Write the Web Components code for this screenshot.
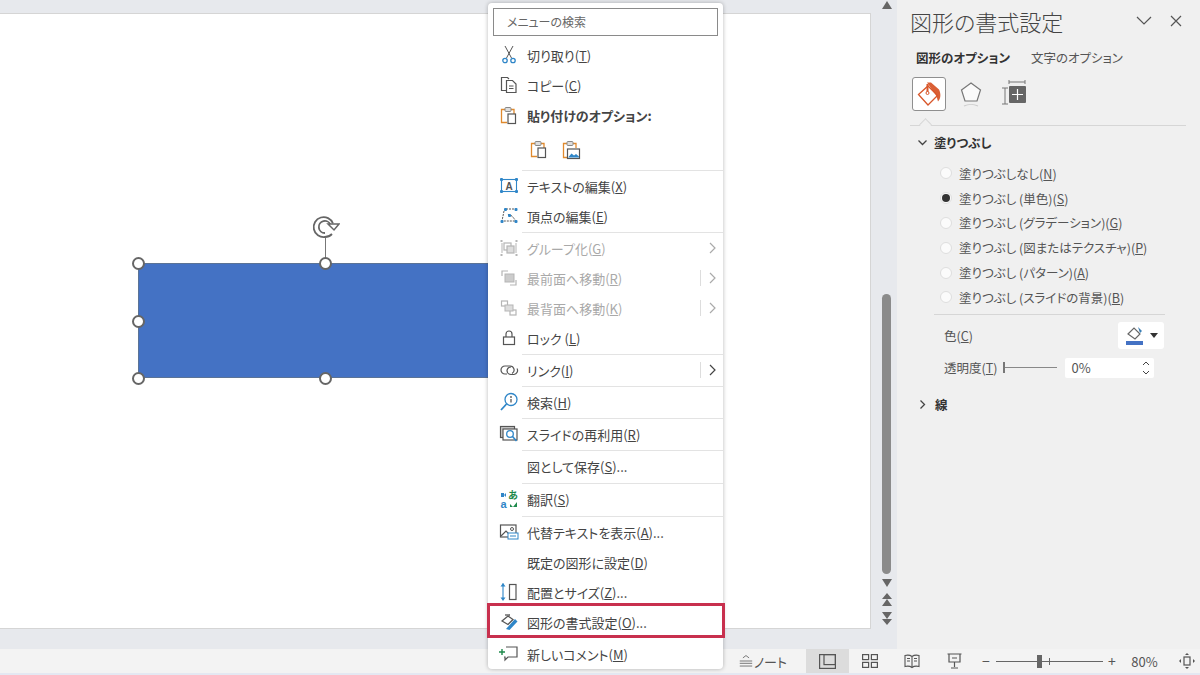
<!DOCTYPE html>
<html lang="ja"><head><meta charset="utf-8"><title>図形の書式設定</title>
<style>
html,body{margin:0;padding:0;width:1200px;height:675px;overflow:hidden;background:#e7e9ed}
body{font-family:"Noto Sans CJK JP","Noto Sans",sans-serif;font-feature-settings:"palt";color:#444}
</style></head><body>
<x-app>
  <x-canvas slot="canvas"></x-canvas>
  <x-scrollbar slot="scroll"></x-scrollbar>
  <x-format-panel slot="panel"></x-format-panel>
  <x-statusbar slot="status"></x-statusbar>
  <x-menu slot="menu">
    <x-menu-item icon="cut">切り取り(<u>T</u>)</x-menu-item>
    <x-menu-item icon="copy">コピー(<u>C</u>)</x-menu-item>
    <x-menu-item icon="paste" h="31"><b>貼り付けのオプション:</b></x-menu-item>
    <x-paste-row></x-paste-row>
    <x-sep></x-sep>
    <x-menu-item icon="textedit">テキストの編集(<u>X</u>)</x-menu-item>
    <x-menu-item icon="points">頂点の編集(<u>E</u>)</x-menu-item>
    <x-sep></x-sep>
    <x-menu-item icon="group" disabled arrow="plain">グループ化(<u>G</u>)</x-menu-item>
    <x-menu-item icon="front" disabled arrow="split">最前面へ移動(<u>R</u>)</x-menu-item>
    <x-menu-item icon="back" disabled arrow="split">最背面へ移動(<u>K</u>)</x-menu-item>
    <x-menu-item icon="lock">ロック (<u>L</u>)</x-menu-item>
    <x-sep></x-sep>
    <x-menu-item icon="link" arrow="split">リンク(<u>I</u>)</x-menu-item>
    <x-sep></x-sep>
    <x-menu-item icon="search">検索(<u>H</u>)</x-menu-item>
    <x-sep></x-sep>
    <x-menu-item icon="reuse">スライドの再利用(<u>R</u>)</x-menu-item>
    <x-sep></x-sep>
    <x-menu-item h="31">図として保存(<u>S</u>)...</x-menu-item>
    <x-sep></x-sep>
    <x-menu-item icon="translate" h="31">翻訳(<u>S</u>)</x-menu-item>
    <x-sep></x-sep>
    <x-menu-item icon="alt">代替テキストを表示(<u>A</u>)...</x-menu-item>
    <x-menu-item>既定の図形に設定(<u>D</u>)</x-menu-item>
    <x-menu-item icon="size">配置とサイズ(<u>Z</u>)...</x-menu-item>
    <x-menu-item icon="format">図形の書式設定(<u>O</u>)...</x-menu-item>
    <x-menu-item icon="comment" style="margin-top:2px">新しいコメント(<u>M</u>)</x-menu-item>
  </x-menu>
</x-app>
<script>
const G='#555',B='#2f86c8',O='#e08a2e',D='#b5b5b5';
const ICONS={
cut:`<path d="M6 1l6.5 12M14 1L7.5 13" stroke="#555" fill="none"/><circle cx="6" cy="15.5" r="2.2" fill="none" stroke="${B}" stroke-width="1.3"/><circle cx="14" cy="15.5" r="2.2" fill="none" stroke="${B}" stroke-width="1.3"/>`,
copy:`<path d="M8 15.5H2.5V2.5H8.5L10 4" fill="none" stroke="${G}" stroke-width="1.2"/><path d="M7.5 5.5h6l3.5 3.5v8.500H7.500z" fill="#fff" stroke="${G}" stroke-width="1.2"/><path d="M10 11h4.500M10 13.500h4.500" stroke="${G}"/>`,
paste:`<path d="M6 3.500H2.500V16.500H8M12 3.500H15V8" fill="none" stroke="${O}" stroke-width="1.3"/><rect x="6" y="1.500" width="6" height="4" rx="1" fill="#ddd" stroke="#888"/><rect x="9" y="8" width="7.500" height="9.500" fill="#fff" stroke="${G}" stroke-width="1.200"/>`,
pastepic:`<path d="M6 3.500H2.500V17.500H7M12 3.500H15V8" fill="none" stroke="${O}" stroke-width="1.3"/><rect x="6" y="1.500" width="6" height="4" rx="1" fill="#ddd" stroke="#888"/><rect x="6.500" y="9" width="12" height="9.500" fill="#fff" stroke="${G}" stroke-width="1.200"/><path d="M7.500 17l3-3.500 2.500 2 2-1.500 3 2.500v1h-10.500z" fill="${B}"/>`,
textedit:`<rect x="2.500" y="3.500" width="15" height="12" fill="none" stroke="${B}" stroke-width="1.100"/><g fill="${B}"><rect x="1" y="2" width="3" height="3" rx="1"/><rect x="16" y="2" width="3" height="3" rx="1"/><rect x="1" y="14" width="3" height="3" rx="1"/><rect x="16" y="14" width="3" height="3" rx="1"/></g><text x="10" y="13.500" font-size="10" font-weight="700" text-anchor="middle" fill="${G}" font-family="Liberation Sans">A</text>`,
points:`<path d="M7 3h9M5 5L3 15h14l-4-5-5-2" fill="none" stroke="${G}" stroke-dasharray="2 1"/><g fill="${B}"><rect x="5" y="2" width="3" height="3" rx="1"/><rect x="15.500" y="2" width="3" height="3" rx="1"/><rect x="1.500" y="14" width="3" height="3" rx="1"/><rect x="15.500" y="14" width="3" height="3" rx="1"/><rect x="9" y="8" width="3" height="3" rx="1"/></g>`,
group:`<g fill="none" stroke="${D}" stroke-width="1.200"><rect x="5" y="5" width="7" height="7"/><rect x="8" y="8" width="7" height="7" fill="#ddd"/></g><g fill="${D}"><rect x="1.500" y="2" width="2" height="2"/><rect x="16.500" y="2" width="2" height="2"/><rect x="1.500" y="16" width="2" height="2"/><rect x="16.500" y="16" width="2" height="2"/></g><path d="M3 5v10M17 5v10" stroke="${D}"/>`,
front:`<path d="M3 8V3h6M11 17h6v-5" fill="none" stroke="${D}" stroke-width="1.200"/><rect x="6" y="6" width="9" height="8" fill="#ccc" stroke="${D}"/>`,
back:`<rect x="2.500" y="3" width="6" height="5" fill="none" stroke="${D}" stroke-width="1.200"/><rect x="11" y="12" width="6" height="5" fill="none" stroke="${D}" stroke-width="1.200"/><rect x="6" y="7" width="8" height="6" fill="#ddd" stroke="${D}"/>`,
lock:`<rect x="4.500" y="9" width="11" height="7.500" fill="none" stroke="${G}" stroke-width="1.200"/><path d="M7 9V6a3 3 0 0 1 6 0v3" fill="none" stroke="${G}" stroke-width="1.200"/>`,
link:`<path d="M8 14H6a4 4 0 0 1 0-8h5a4 4 0 0 1 2 7.500" fill="none" stroke="${G}" stroke-width="1.200"/><path d="M12 7.500a4 4 0 0 0-4 3.500 4 4 0 0 0 4 4h3a4 4 0 0 0 3-6" fill="none" stroke="${G}" stroke-width="1.200" transform="translate(0 -.5)"/>`,
search:`<circle cx="12" cy="7.500" r="6" fill="none" stroke="${B}" stroke-width="1.300"/><path d="M7.500 12L2 18" stroke="${B}" stroke-width="1.800"/><path d="M12 7v3.500" stroke="${G}" stroke-width="1.300"/><circle cx="12" cy="5" r=".9" fill="${G}"/>`,
reuse:`<rect x="1.500" y="2.500" width="14" height="11" fill="#ccc" stroke="${G}" stroke-width="1.200"/><rect x="4" y="5" width="14" height="11" fill="#fff" stroke="${G}" stroke-width="1.200"/><circle cx="11" cy="10" r="3.300" fill="none" stroke="${B}" stroke-width="1.300"/><path d="M13.500 12.500L17.500 17" stroke="${B}" stroke-width="1.600"/>`,
translate:`<path d="M2 3h3v4H2zM7 3L5 5l2 2z" fill="${B}"/><text x="4.500" y="18" font-size="11" font-weight="700" text-anchor="middle" fill="${B}" font-family="Liberation Sans">a</text><text x="14" y="9" font-size="10" font-weight="700" text-anchor="middle" fill="#1f8a4c" font-family="Noto Sans CJK JP">あ</text><path d="M11 14l3 3h-3zM18 12v5h-4z" fill="#1f8a4c"/>`,
alt:`<rect x="1.500" y="3" width="15.500" height="12" fill="none" stroke="${G}" stroke-width="1.200"/><path d="M2 14l5-5 4 4" fill="none" stroke="${G}" stroke-width="1.200"/><circle cx="13" cy="7" r="1.500" fill="none" stroke="${G}"/><rect x="9" y="11" width="10" height="6" fill="#fff" stroke="${B}"/><path d="M11 14h6" stroke="${B}"/>`,
size:`<path d="M4 1.500v16" stroke="${B}" stroke-width="1.100"/><path d="M4 1L1.500 4.500h5zM4 19l2.500-3.500h-5z" fill="${B}"/><rect x="10.500" y="2.500" width="6.500" height="15" fill="#fff" stroke="${G}" stroke-width="1.200"/>`,
format:`<path d="M3 9l6-5 5 3.500-5 5z" fill="#fff" stroke="${G}" stroke-width="1.300"/><path d="M6 3h5" stroke="${G}" stroke-width="1.300"/><path d="M7 17l9-10 2.500 2.500-8 8.500z" fill="${B}"/>`,
comment:`<path d="M7 3h11v10H9l-3 3v-3H5" fill="none" stroke="${G}" stroke-width="1.200"/><path d="M3 5v6M0 8h6" stroke="#1f8a4c" stroke-width="1.400"/>`
};
function def(name,css,html,extra){
  customElements.define(name,class extends HTMLElement{
    constructor(){super();const r=this.attachShadow({mode:'open'});r.innerHTML=`<style>${css}</style>${html}`;}
    connectedCallback(){if(extra)extra(this,this.shadowRoot);}
  });
}
def('x-app',`:host{display:grid;grid-template-columns:876px 21px 303px;grid-template-rows:649px 26px;width:1200px;height:675px;position:relative;overflow:hidden}
::slotted([slot=status]){grid-column:1/4}`,
`<slot name="canvas"></slot><slot name="scroll"></slot><slot name="panel"></slot><slot name="status"></slot><slot name="menu"></slot>`);

def('x-canvas',`:host{display:block;position:relative;background:#e7e9ed;overflow:hidden}
.slide{position:absolute;left:-2px;top:13px;width:871px;height:614px;background:#fff;border:1px solid #d5d5d5}
.shape{position:absolute;left:138px;top:263px;width:360px;height:115px;box-sizing:border-box;background:#4472c4;border:1px solid #5b7396}
.h{position:absolute;width:9px;height:9px;margin:-6.5px 0 0 -6.5px;border:2px solid #666;border-radius:50%;background:#fff}
.l{position:absolute;left:324.500px;top:238px;width:1px;height:22px;background:#777}
svg{position:absolute;left:312px;top:214px}`,
`<div class="slide"></div><div class="shape"></div><div class="l"></div>
<i class="h" style="left:138px;top:263px"></i><i class="h" style="left:325px;top:263px"></i><i class="h" style="left:138px;top:321px"></i><i class="h" style="left:138px;top:378px"></i><i class="h" style="left:325px;top:378px"></i>
<svg width="28" height="26" viewBox="0 0 28 26" fill="none" stroke="#666" stroke-width="1.800"><path d="M21 9.500A10 10 0 1 0 13 23a10 10 0 0 0 7-3"/><path d="M18.500 11A6 6 0 1 0 13 19"/><path d="M16 10l6 6 5-6z" fill="#fff" stroke-width="1.500"/></svg>`);

def('x-scrollbar',`:host{display:flex;flex-direction:column;align-items:center;background:#e7e9ed;position:relative}
.arr{width:0;height:0;border-left:5px solid transparent;border-right:5px solid transparent}
.up{border-bottom:8px solid #666;margin-top:1px}
.track{height:285px;margin-top:0}
.thumb{width:9px;height:280px;background:#8b8b8b;border-radius:5px}
.dn{border-top:8px solid #666;margin-top:5px}
svg{display:block;margin-top:6px}`,
`<div class="arr up"></div><div class="track"></div><div class="thumb"></div><div class="arr dn"></div>
<svg width="12" height="14" viewBox="0 0 12 14" fill="#666"><path d="M6 0l5 6H1zM6 6l5 7H1z"/></svg>
<svg style="margin-top:4px" width="12" height="14" viewBox="0 0 12 14" fill="#666"><path d="M6 14l5-6H1zM6 8l5-7H1z"/></svg>`);

def('x-menu',`:host{display:block;position:absolute;left:488px;top:3px;width:235px;height:666px;box-sizing:border-box;background:#fff;border-radius:4px;box-shadow:0 0 4px rgba(0,0,0,.28);padding-bottom:1px}
.search{height:37px;box-sizing:border-box;padding:5px 5px 4px}
.search div{height:28px;box-sizing:border-box;border:1px solid #8a8a8a;font-size:12px;line-height:26px;padding-left:13px;color:#666}
.red{position:absolute;left:-1px;top:600px;width:238px;height:35px;box-sizing:border-box;border:3px solid #c8304e;pointer-events:none}`,
`<div class="search"><div>メニューの検索</div></div><slot></slot><div class="red"></div>`);

def('x-sep',`:host{display:block;height:1px;margin:1px 0 0 34px;background:#e3e3e3}`,``);

def('x-paste-row',`:host{display:flex;height:38px;align-items:center;gap:12px;padding:0 0 1px 41px;box-sizing:border-box}`,
`<x-icon name="paste" size="20"></x-icon><x-icon name="pastepic" size="20"></x-icon>`);

def('x-icon',`:host{display:block;line-height:0}`,`<svg></svg>`,(el,r)=>{
  const s=r.querySelector('svg');const z=el.getAttribute('size')||20;
  s.setAttribute('width',z);s.setAttribute('height',z);s.setAttribute('viewBox','0 0 20 20');
  s.innerHTML=ICONS[el.getAttribute('name')]||'';
});

def('x-menu-item',`:host{display:flex;align-items:center;height:30px;font-size:13px;color:#444;position:relative;white-space:nowrap}
:host([disabled]){color:#a9a9a9}
.ic{width:20px;height:20px;margin:0 8px 0 11px;flex:none}
.lab{flex:1}
.arr{display:flex;align-items:center;height:16px;width:26px;flex:none;justify-content:flex-end;padding-right:7px;box-sizing:content-box}
.arr.split{border-left:1px solid #ddd;width:15px;margin-right:0}
.arr svg{display:block}`,
`<div class="ic"></div><div class="lab"><slot></slot></div><div class="arr-wrap"></div>`,(el,r)=>{
  const h=el.getAttribute('h');if(h)el.style.height=h+'px';
  const n=el.getAttribute('icon');
  if(n)r.querySelector('.ic').innerHTML=`<x-icon name="${n}"></x-icon>`;
  const a=el.getAttribute('arrow');
  if(a){const c=el.hasAttribute('disabled')?'#aaa':'#444';
   r.querySelector('.arr-wrap').innerHTML=`<div class="arr ${a}"><svg width="7" height="12" viewBox="0 0 7 12" fill="none" stroke="${c}" stroke-width="1.200"><path d="M1 1l5 5-5 5"/></svg></div>`;}
});

def('x-radio',`:host{display:flex;align-items:center;height:24.800px;font-size:12.500px;color:#555;white-space:nowrap}
i{width:12px;height:12px;box-sizing:border-box;border-radius:50%;background:#fbfbfb;border:1px solid #dedede;margin:0 7px 0 37px;display:flex;align-items:center;justify-content:center;flex:none}
:host([on]) i::after{content:"";width:8px;height:8px;border-radius:50%;background:#333}`,`<i></i><span><slot></slot></span>`);

def('x-format-panel',`:host{display:block;background:#f0f0f0;position:relative;font-size:12.500px;color:#555;height:649px;overflow:hidden}
.head{height:42px;display:flex;align-items:center;padding-left:13px}
.title{font-size:22px;font-weight:300;color:#444;flex:1;line-height:42px;letter-spacing:0}
.head svg{display:block}
.tabs{display:flex;height:30px;align-items:center;padding-left:19px;gap:21px;font-size:12.500px}
.tabs b{color:#333}
.icons{display:flex;align-items:flex-start;height:34px;margin-top:5px;padding-left:15px}
.sel{width:34px;height:34px;box-sizing:border-box;border:1px solid #8f8f8f;border-radius:3px;background:#fff;display:flex;align-items:center;justify-content:center}
.sep{height:1px;background:#d6d6d6;margin:14px 14px 0 13px;position:relative}
.sep::after{content:"";position:absolute;left:11px;top:-5px;width:8px;height:8px;transform:rotate(45deg);background:#f0f0f0;border-left:1px solid #d6d6d6;border-top:1px solid #d6d6d6}
.sec{display:flex;align-items:center;font-weight:700;font-size:12.500px;color:#333;height:33px;padding-left:21px;gap:7px;white-space:nowrap}
.radios{margin-top:2px;padding-left:6px}
.hr{height:1px;background:#d6d6d6;margin:4px 35px 0 37px}
.row{display:flex;align-items:center;padding-left:47px;white-space:nowrap}
.colorbtn{width:46px;height:27px;background:#fff;border-radius:3px;margin-left:auto;margin-right:36px;display:flex;align-items:center;justify-content:center;gap:5px}
.slider{width:54px;height:1px;background:#888;margin-left:6px;position:relative}
.slider::before{content:"";position:absolute;left:0;top:-5px;width:2px;height:11px;background:#777}
.num{width:89px;height:20px;background:#fff;border-radius:2px;margin-left:8px;display:flex;align-items:center;justify-content:space-between;padding:0 4px 0 6px;box-sizing:border-box;font-size:13px}`,
`<div class="head"><div class="title">図形の書式設定</div>
<svg width="16" height="10" viewBox="0 0 16 10" fill="none" stroke="#555" stroke-width="1.200" style="margin-right:18px"><path d="M1 1l7 7 7-7"/></svg>
<svg width="12" height="12" viewBox="0 0 12 12" fill="none" stroke="#555" stroke-width="1.200" style="margin-right:18px"><path d="M1 1l10 10M11 1L1 11"/></svg></div>
<div class="tabs"><b>図形のオプション</b><span>文字のオプション</span></div>
<div class="icons"><div class="sel"><svg width="26" height="26" viewBox="0 0 26 26" fill="none"><path d="M2.500 13.500L12 5l9.500 9.500L12 24z" stroke="#d8562a" stroke-width="1.300"/><path d="M9 9V3a2 2 0 0 1 4 0l1 1h5l5 7c1 4 0 7-2 9-1-3-1-5-3-7z" fill="none"/><path d="M11 1.500h4l8 7c2 4 2 9-1 12-1-4-2-7-4-9z" fill="#d8562a" opacity=".95"/><rect x="10.500" y="3" width="2" height="8" fill="#d8562a"/><circle cx="11.500" cy="12" r="1.500" fill="#fff" stroke="#d8562a"/></svg></div>
<svg width="24" height="28" viewBox="0 0 24 28" fill="none" stroke="#777" stroke-width="1.200" style="margin:3px 0 0 13px"><path d="M12 3l9.500 7-3.500 11H6L2.500 10z" fill="#fafafa"/><path d="M5 26c4-2 10-2 14 0" stroke="#ccc"/></svg>
<svg width="26" height="26" viewBox="0 0 26 26" style="margin:3px 0 0 19px"><path d="M7 2h16M7 0v4M23 0v4" stroke="#777" fill="none"/><path d="M3 8v16M0 8h6M0 24h6" stroke="#777" fill="none"/><rect x="7" y="6" width="17" height="17" rx="1" fill="#666"/><path d="M15.500 9v11M10 14.500h11" stroke="#fff" stroke-width="1.200"/></svg></div>
<div class="sep"></div>
<div class="sec" style="margin-top:0"><svg width="9" height="6" viewBox="0 0 9 6" fill="none" stroke="#444" stroke-width="1.300"><path d="M.5.500l4 4 4-4"/></svg>塗りつぶし</div>
<div class="radios">
<x-radio>塗りつぶしなし(<u>N</u>)</x-radio>
<x-radio on>塗りつぶし (単色)(<u>S</u>)</x-radio>
<x-radio>塗りつぶし (グラデーション)(<u>G</u>)</x-radio>
<x-radio>塗りつぶし (図またはテクスチャ)(<u>P</u>)</x-radio>
<x-radio>塗りつぶし (パターン)(<u>A</u>)</x-radio>
<x-radio>塗りつぶし (スライドの背景)(<u>B</u>)</x-radio>
</div>
<div class="hr"></div>
<div class="row" style="height:27px;margin-top:7px"><span>色(<u>C</u>)</span><div class="colorbtn"><svg width="20" height="22" viewBox="0 0 20 22"><path d="M3 10l6-6 6 6-5 5z" fill="#fff" stroke="#666" stroke-width="1.200"/><path d="M13 3l4 4-2 2z" fill="#3a7fb5"/><rect x="1" y="17" width="17" height="4" fill="#4472c4"/></svg><svg width="8" height="5" viewBox="0 0 8 5"><path d="M0 0h8L4 5z" fill="#333"/></svg></div></div>
<div class="row" style="height:20px;margin-top:9px"><span>透明度(<u>T</u>)</span><div class="slider"></div><div class="num"><span>0%</span><svg width="8" height="16" viewBox="0 0 8 16" fill="none" stroke="#444"><path d="M1 5l3-3 3 3M1 11l3 3 3-3"/></svg></div></div>
<div class="sec" style="margin-top:10px;padding-left:23px;gap:9px"><svg width="6" height="9" viewBox="0 0 6 9" fill="none" stroke="#444" stroke-width="1.300"><path d="M.5.500l4 4-4 4"/></svg>線</div>`);

def('x-statusbar',`:host{display:flex;align-items:center;height:26px;background:#f3f3f3;box-sizing:border-box;border-bottom:2px solid #e4e8f2;font-size:13px;color:#555;white-space:nowrap}
.sp{flex:1}
.note{display:flex;align-items:center;gap:1px;width:48px;margin-right:19px;height:24px;font-size:13px}
.v{width:42.500px;height:24px;display:flex;align-items:center;justify-content:center}
.v.on{background:#dcdcdc}
.m{width:20px;text-align:center;font-size:14px}
.zs{width:107px;height:1px;background:#666;position:relative}
.zs::before{content:"";position:absolute;left:41px;top:-6px;width:5px;height:13px;background:#666}
.zs::after{content:"";position:absolute;left:53px;top:-3px;width:1px;height:7px;background:#666}
.p{width:47px;text-align:center}
.fit{width:32px;display:flex;justify-content:flex-end;padding-right:5px;box-sizing:border-box}`,
`<div class="sp"></div>
<div class="note"><svg width="18" height="16" viewBox="0 0 18 16" fill="none" stroke="#555"><path d="M5 4l4-3 4 3M1 8h16M1 11h16M1 14.500h16"/></svg><span>ノート</span></div>
<div class="v on"><svg width="17" height="15" viewBox="0 0 17 15" fill="none" stroke="#555" stroke-width="1.200"><rect x=".6" y=".6" width="15.800" height="13.800"/><rect x="5" y=".6" width="11.400" height="10" /></svg></div>
<div class="v"><svg width="16" height="14" viewBox="0 0 16 14" fill="none" stroke="#555" stroke-width="1.200"><rect x=".6" y=".6" width="6" height="5"/><rect x="9.400" y=".6" width="6" height="5"/><rect x=".6" y="8.400" width="6" height="5"/><rect x="9.400" y="8.400" width="6" height="5"/></svg></div>
<div class="v"><svg width="16" height="15" viewBox="0 0 16 15" fill="none" stroke="#555" stroke-width="1.100"><path d="M8 2.500C6 1 3 1 1 1.500v11c2-.5 5-.5 7 1 2-1.500 5-1.500 7-1v-11c-2-.5-5-.5-7 1zM8 2.500v11M3 4.500h3M3 7h3M10 4.500h3M10 7h3"/></svg></div>
<div class="v"><svg width="15" height="16" viewBox="0 0 15 16" fill="none" stroke="#555" stroke-width="1.200"><path d="M.5 1h14M2 1v8h11V1M7.500 9v5M4 15h7M5 5h5"/></svg></div>
<div class="m">−</div><div class="zs"></div><div class="m" style="width:18px">+</div><div class="p">80%</div>
<div class="fit"><svg width="16" height="16" viewBox="0 0 16 16" fill="none" stroke="#555"><rect x="5" y="4" width="6" height="8" stroke-width="1.200"/><path d="M8 0l2 2H6zM8 16l-2-2h4zM0 8l2-2v4zM16 8l-2 2V6z" fill="#555" stroke="none"/></svg></div>`);
</script>
</body></html>
